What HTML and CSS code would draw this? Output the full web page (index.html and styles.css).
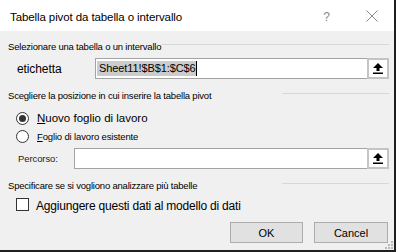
FILE: index.html
```html
<!DOCTYPE html>
<html>
<head>
<meta charset="utf-8">
<link rel="stylesheet" href="styles.css">
</head>
<body>
<div class="window">
  <div class="titlebar">
    <span class="title">Tabella pivot da tabella o intervallo</span>
    <span class="help">?</span>
    <svg class="close" width="12" height="12" viewBox="0 0 12 12"><path d="M0.5 0.5 L11.5 11.5 M11.5 0.5 L0.5 11.5" stroke="#8a8a8a" stroke-width="1" fill="none"/></svg>
  </div>
  <div class="body">
    <div class="section s1"><span class="head">Selezionare una tabella o un intervallo</span><span class="rule r1"></span></div>
    <div class="range-row">
      <span class="lbl">etichetta</span>
      <div class="field f1">
        <span class="value"><span class="sel">Sheet11!$B$1:$C$6</span><span class="caret"></span></span>
        <span class="pick"><svg width="10" height="11" viewBox="0 0 10 11"><path d="M5 0 L10 5 L6.5 5 L6.5 8 L3.5 8 L3.5 5 L0 5 Z" fill="#000"/><rect x="0" y="9.5" width="10" height="1.5" fill="#000"/></svg></span>
      </div>
    </div>
    <div class="section s2"><span class="head">Scegliere la posizione in cui inserire la tabella pivot</span><span class="rule r2"></span></div>
    <div class="radio r-new"><span class="dot checked"></span><span class="rtext big"><u>N</u>uovo foglio di lavoro</span></div>
    <div class="radio r-old"><span class="dot"></span><span class="rtext small"><u>F</u>oglio di lavoro esistente</span></div>
    <div class="path-row">
      <span class="plbl">Percorso:</span>
      <div class="field f2">
        <span class="value"></span>
        <span class="pick"><svg width="10" height="11" viewBox="0 0 10 11"><path d="M5 0 L10 5 L6.5 5 L6.5 8 L3.5 8 L3.5 5 L0 5 Z" fill="#000"/><rect x="0" y="9.5" width="10" height="1.5" fill="#000"/></svg></span>
      </div>
    </div>
    <div class="section s3"><span class="head">Specificare se si vogliono analizzare più tabelle</span><span class="rule r3"></span></div>
    <div class="check-row"><span class="box"></span><span class="ctext">Aggiungere questi dati al modello di dati</span></div>
    <div class="buttons">
      <button class="btn ok">OK</button>
      <button class="btn cancel">Cancel</button>
    </div>
    <svg class="grip" width="8" height="8" viewBox="0 0 8 8">
      <rect x="6" y="0" width="2" height="2" fill="#b8b8b8"/>
      <rect x="3" y="3" width="2" height="2" fill="#b8b8b8"/>
      <rect x="6" y="3" width="2" height="2" fill="#b8b8b8"/>
      <rect x="0" y="6" width="2" height="2" fill="#b8b8b8"/>
      <rect x="3" y="6" width="2" height="2" fill="#b8b8b8"/>
      <rect x="6" y="6" width="2" height="2" fill="#b8b8b8"/>
    </svg>
  </div>
</div>
</body>
</html>
```

FILE: styles.css
```css
* { box-sizing: border-box; }
html, body { margin: 0; padding: 0; background: #ffffff; }
body { font-family: "Liberation Sans", Arial, sans-serif; color: #000; }

.window {
  width: 396px;
  height: 252px;
  display: flex;
  flex-direction: column;
  border-right: 2px solid #1f1f1f;
  border-bottom: 2px solid #1f1f1f;
  overflow: hidden;
}

.titlebar {
  height: 31px;
  flex: none;
  background: #ffffff;
  display: flex;
  align-items: center;
  padding: 2px 0 0 10px;
}
.title { font-size: 11.5px; letter-spacing: -0.1px; flex: 1; color: #000; }
.help { font-size: 12px; color: #8a8a8a; margin-right: 36px; }
.close { margin-right: 16px; margin-top: -1px; }

.body {
  flex: 1;
  background: #f0f0f0;
  position: relative;
  padding: 0 5px 0 8px;
  display: flex;
  flex-direction: column;
}

.section {
  display: flex;
  align-items: center;
  height: 13px;
  font-size: 9.5px;
  letter-spacing: -0.2px;
  color: #000;
  flex: none;
}
.head { white-space: nowrap; }
.rule { height: 1px; background: #d7d7d7; margin-left: auto; align-self: flex-start; margin-top: 4px; }
.s1 { margin-top: 9px; }
.r1 { width: 227px; }
.r2 { width: 107px; }
.r3 { width: 107px; }

.range-row {
  display: flex;
  align-items: center;
  margin-top: 5px;
  height: 21px;
  flex: none;
}
.lbl { font-size: 12px; width: 87px; padding-left: 9px; letter-spacing: -0.1px; }
.field {
  flex: 1;
  height: 21px;
  display: flex;
  border: 1px solid #a3a3a3;
  background: #fff;
}
.value { flex: 1; display: flex; align-items: center; padding-left: 1px; }
.sel { background: #cccccc; font-size: 11px; line-height: 15px; letter-spacing: -0.1px; padding: 0 0 0 2px; }
.caret { width: 1px; height: 15px; background: #000; }
.pick {
  width: 22px;
  flex: none;
  display: flex;
  align-items: center;
  justify-content: center;
  border: 2px solid #c4c4c4;
  background: #ffffff;
  margin: -1px -1px -1px 0;
}

.s2 { margin-top: 10px; }
.radio { display: flex; align-items: center; padding-left: 8px; flex: none; height: 18px; }
.r-new { margin-top: 7px; }
.dot {
  width: 13px; height: 13px;
  border: 1px solid #333;
  border-radius: 50%;
  background: #fff;
  display: flex; align-items: center; justify-content: center;
  margin-right: 8px;
  flex: none;
}
.dot.checked::after { content: ""; width: 7px; height: 7px; border-radius: 50%; background: #333; }
.rtext.big { font-size: 11.5px; }
.rtext.small { font-size: 9.5px; letter-spacing: -0.15px; }

.path-row { display: flex; align-items: center; margin-top: 3px; height: 21px; flex: none; }
.plbl { font-size: 9.5px; width: 66px; padding-left: 10px; color: #222; letter-spacing: -0.1px; }

.s3 { margin-top: 10px; }
.check-row { display: flex; align-items: center; height: 15px; margin-top: 5px; padding-left: 8px; flex: none; }
.box { width: 13px; height: 13px; border: 1px solid #333; background: #fff; margin-right: 7px; flex: none; }
.ctext { font-size: 12px; letter-spacing: -0.2px; padding-top: 2px; }

.buttons { display: flex; justify-content: flex-end; gap: 11px; margin-top: 10px; margin-right: 1px; flex: none; }
.btn {
  height: 21px;
  border: 1px solid #adadad;
  background: #e1e1e1;
  font-family: inherit;
  font-size: 11px;
  color: #000;
  padding: 0;
}
.ok { width: 73px; }
.cancel { width: 74px; }
.grip { position: absolute; right: 1px; bottom: 1px; }
```
